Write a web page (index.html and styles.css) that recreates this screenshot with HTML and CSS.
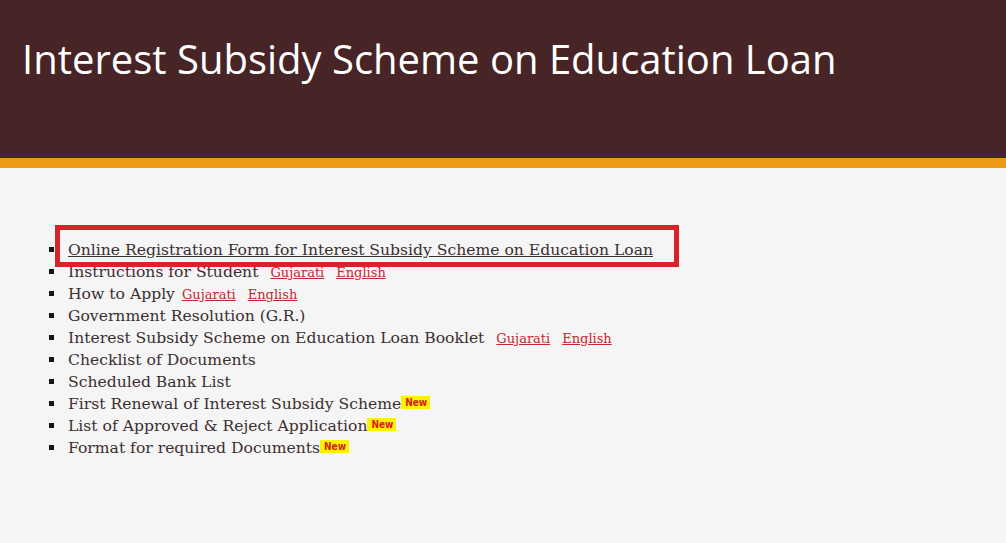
FILE: index.html
```html
<!DOCTYPE html>
<html lang="en">
<head>
<meta charset="utf-8">
<title>Interest Subsidy Scheme on Education Loan</title>
<link rel="stylesheet" href="styles.css">
</head>
<body>
<header class="banner">
  <h1 class="banner-title">Interest Subsidy Scheme on Education Loan</h1>
</header>
<main class="content">
  <ul class="links">
    <li class="item highlighted"><a class="main-link" href="#">Online Registration Form for Interest Subsidy Scheme on Education Loan</a></li>
    <li class="item">Instructions for Student <a class="lang" href="#">Gujarati</a> <a class="lang" href="#">English</a></li>
    <li class="item">How to Apply <a class="lang tight" href="#">Gujarati</a> <a class="lang" href="#">English</a></li>
    <li class="item">Government Resolution (G.R.)</li>
    <li class="item">Interest Subsidy Scheme on Education Loan Booklet <a class="lang" href="#">Gujarati</a> <a class="lang" href="#">English</a></li>
    <li class="item">Checklist of Documents</li>
    <li class="item">Scheduled Bank List</li>
    <li class="item">First Renewal of Interest Subsidy Scheme<span class="badge">New</span></li>
    <li class="item">List of Approved &amp; Reject Application<span class="badge">New</span></li>
    <li class="item">Format for required Documents<span class="badge">New</span></li>
  </ul>
</main>
</body>
</html>
```
FILE: styles.css
```css
html, body {
  margin: 0;
  padding: 0;
}
body {
  background: #f5f5f5;
  width: 1006px;
  height: 543px;
  overflow: hidden;
}
.banner {
  background: #472426;
  height: 158px;
  border-bottom: 10px solid #ef9a17;
  padding: 0 0 0 22px;
}
.banner-title {
  margin: 0;
  padding-top: 33px;
  font-family: "Open Sans", sans-serif;
  font-weight: 400;
  font-size: 40px;
  line-height: 52px;
  color: #ffffff;
  letter-spacing: 0;
}
.content {
  padding: 71px 0 0 0;
}
.links {
  margin: 0;
  padding: 0 0 0 68px;
  list-style: none;
  font-family: "DejaVu Serif", serif;
  font-size: 15.6px;
  line-height: 22px;
  color: #3b2f2f;
}
.item {
  height: 22px;
  white-space: nowrap;
}
.item::before {
  content: "";
  display: inline-block;
  width: 5px;
  height: 5px;
  background: #141414;
  margin-left: -19px;
  margin-right: 14px;
  vertical-align: 3px;
}
.highlighted {
  position: relative;
}
.highlighted::after {
  content: "";
  position: absolute;
  left: -13px;
  top: -14px;
  width: 614px;
  height: 32px;
  border: 5px solid #d9232b;
}
.main-link {
  color: #3b2f2f;
  text-decoration: underline;
}
.lang {
  font-size: 13px;
  line-height: 1;
  color: #c3282c;
  margin-left: 7px;
}
.lang.tight {
  margin-left: 2px;
}
.badge {
  display: inline-block;
  background: #fff200;
  color: #d0201d;
  font-family: "Liberation Sans Narrow", "DejaVu Sans Condensed", sans-serif;
  font-weight: 700;
  font-size: 10px;
  line-height: 13px;
  padding: 0 3px 0 4px;
  vertical-align: top;
  margin-top: 3px;
}
```
